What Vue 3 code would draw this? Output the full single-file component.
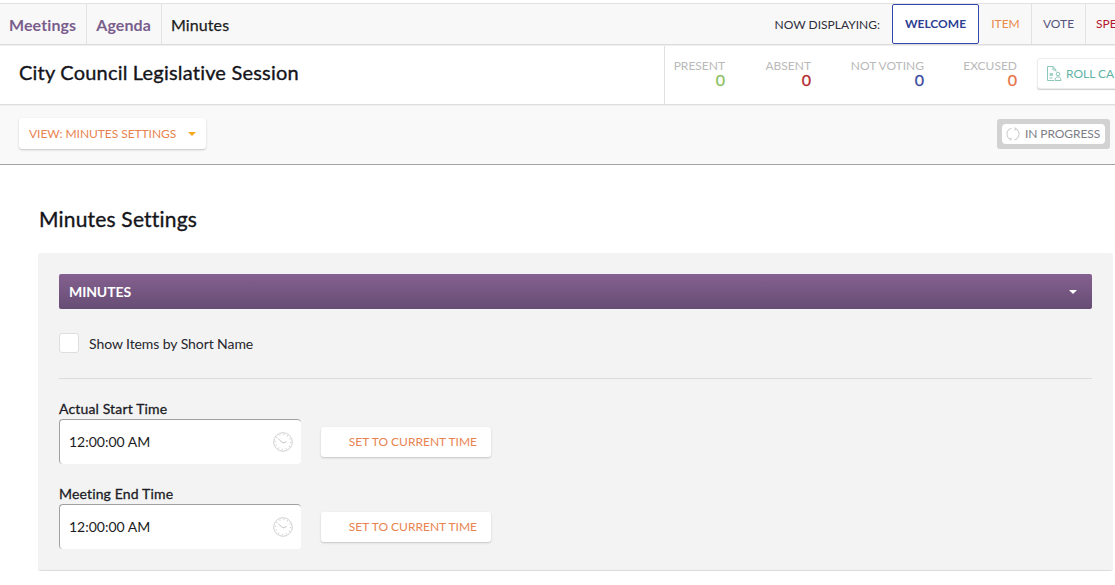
<script setup>
const stats = [
  { label: 'PRESENT', color: '#8cc063', w: 52 },
  { label: 'ABSENT', color: '#b3282d', w: 45 },
  { label: 'NOT VOTING', color: '#3a4a9f', w: 73 },
  { label: 'EXCUSED', color: '#e8734a', w: 53 },
]
const times = ['Actual Start Time', 'Meeting End Time']
</script>

<template>
  <div class="page">
    <nav class="topnav">
      <a class="crumb link first">Meetings</a>
      <a class="crumb link">Agenda</a>
      <a class="crumb current">Minutes</a>
      <div class="display">
        <span class="display-label">NOW DISPLAYING:</span>
        <span class="tab active">WELCOME</span>
        <span class="tab item">ITEM</span>
        <span class="tab vote">VOTE</span>
        <span class="tab speaker">SPEAKER</span>
      </div>
    </nav>

    <header class="header">
      <h1>City Council Legislative Session</h1>
      <div class="stats">
        <div v-for="s in stats" :key="s.label" class="stat" :style="{ width: s.w + 'px' }">
          <span class="stat-label">{{ s.label }}</span>
          <span class="stat-value" :style="{ color: s.color }">0</span>
        </div>
        <button class="rollcall">
          <svg width="15" height="16" viewBox="0 0 15 16" fill="none" stroke="#8cc8ba" stroke-width="1">
            <path d="M9 5.500V4L6 .5H.5v14H7" />
            <path d="M6 .5V4h3" />
            <path d="M2.500 7h3.500v3H2.500z" fill="#a6d5ca" stroke="none" />
            <path d="M2.500 12h3" />
            <circle cx="11" cy="8" r="1.800" />
            <path d="M8 14.500c0-2.500 1.300-3.700 3-3.700s3 1.200 3 3.700z" />
          </svg>
          <span>ROLL CALL</span>
        </button>
      </div>
    </header>

    <div class="toolbar">
      <button class="view-btn">
        <span>VIEW: MINUTES SETTINGS</span>
        <i class="caret orange"></i>
      </button>
      <div class="status">
        <div class="status-inner">
          <svg width="14" height="14" viewBox="0 0 14 14" fill="none" stroke="#cfcfcf" stroke-width="1.100">
            <path d="M5.500 1.200A6 6 0 0 0 3.500 11.900" />
            <path d="M8.500 12.800A6 6 0 0 0 10.500 2.100" />
            <path d="M8.500 .6l2 1.500-2.200 1" />
            <path d="M5.500 13.400l-2-1.500 2.200-1" />
          </svg>
          <span>IN PROGRESS</span>
        </div>
      </div>
    </div>

    <main class="content">
      <h2>Minutes Settings</h2>
      <section class="panel">
        <div class="bar">
          <span>MINUTES</span>
          <i class="caret white"></i>
        </div>
        <label class="check">
          <span class="box"></span>
          <span>Show Items by Short Name</span>
        </label>
        <hr />
        <div class="fields">
          <div v-for="t in times" :key="t" class="field">
            <div class="field-label">{{ t }}</div>
            <div class="field-row">
              <div class="input">
                <span class="time">12:00:00 AM</span>
                <svg width="20" height="20" viewBox="0 0 20 20" fill="none" stroke="#d0d0d0">
                  <circle cx="10" cy="10" r="9.300" />
                  <circle cx="10" cy="10" r="7.500" stroke-dasharray="1 2.930" stroke-width="1.300" />
                  <path d="M5.500 7l4.500 4 3.500-1.500" stroke="#c4c4c4" />
                </svg>
              </div>
              <button class="set-btn">SET TO CURRENT TIME</button>
            </div>
          </div>
        </div>
      </section>
    </main>
  </div>
</template>

<style scoped>
.page {
  width: 1115px;
  height: 585px;
  overflow: hidden;
  background: #fff;
  font-family: Lato, "Open Sans", sans-serif;
  color: #1c1c22;
  padding-top: 3px;
  box-sizing: border-box;
}
.topnav {
  display: flex;
  height: 42px;
  box-sizing: border-box;
  background: #f8f8f8;
  border-top: 1px solid #e2e2e2;
  border-bottom: 1px solid #dcdcdc;
}
.crumb {
  display: flex;
  align-items: center;
  padding: 0 10px 0 9px;
  font-size: 16px;
  border-right: 1px solid #e2e2e2;
}
.link {
  color: #7a5d8c;
  font-weight: 700;
  letter-spacing: 0.1px;
}
.current {
  border-right: 0;
  color: #1c1c22;
  -webkit-text-stroke: 0.25px #1c1c22;
  letter-spacing: 0.1px;
}
.display {
  margin-left: auto;
  display: flex;
  align-items: stretch;
  white-space: nowrap;
}
.display-label {
  align-self: center;
  font-size: 12px;
  color: #2e2e3a;
  margin-right: 12px;
}
.tab {
  display: flex;
  align-items: center;
  justify-content: center;
  font-size: 12px;
  box-sizing: border-box;
  padding-bottom: 1px;
}
.tab.active {
  width: 87px;
  background: #fff;
  border: 1px solid #3348a8;
  border-radius: 2px;
  color: #2e3f94;
  font-weight: 700;
}
.tab.item {
  width: 52px;
  color: #ea8a4a;
  border-right: 1px solid #e2e2e2;
  margin-left: 1px;
}
.tab.vote {
  width: 54px;
  color: #57537c;
  border-right: 1px solid #e2e2e2;
}
.tab.speaker {
  color: #b3182d;
  padding-left: 10px;
  width: 29px;
  overflow: hidden;
  justify-content: flex-start;
}
.header {
  display: flex;
  align-items: stretch;
  justify-content: space-between;
  height: 60px;
  box-sizing: border-box;
  border-top: 1px solid #efefef;
  border-bottom: 1px solid #dedede;
  background: #fff;
}
h1 {
  margin: 0;
  padding: 13px 0 0 19px;
  font-size: 20px;
  font-weight: 400;
  line-height: 27px;
  letter-spacing: 0.2px;
  -webkit-text-stroke: 0.35px #14141a;
  color: #14141a;
}
.stats {
  display: flex;
  width: 451px;
  flex-shrink: 0;
  box-sizing: border-box;
  border-left: 1px solid #e0e0e0;
  padding-top: 13px;
  overflow: hidden;
}
.stat {
  display: flex;
  flex-direction: column;
  align-items: flex-end;
  flex-shrink: 0;
  margin-right: 41px;
  white-space: nowrap;
}
.stat:first-child {
  margin-left: 8px;
}
.stat:nth-child(2) {
  margin-right: 40px;
}
.stat:nth-child(3) {
  margin-right: 40px;
}
.stat:nth-child(4) {
  margin-right: 20px;
}
.stat-label {
  font-size: 12px;
  line-height: 14px;
  color: #b9b9b9;
}
.stat-value {
  font-size: 16px;
  line-height: 13px;
  -webkit-text-stroke: 0.3px currentColor;
}
.rollcall {
  flex-shrink: 0;
  display: flex;
  align-items: center;
  gap: 4px;
  height: 31px;
  margin-top: -1px;
  padding: 0 8px 0 9px;
  width: 110px;
  background: #fff;
  border: 1px solid #ececec;
  border-radius: 3px;
  box-shadow: 0 1px 1px #cfcfcf;
  font: 12px Lato, sans-serif;
  color: #5fb3a5;
  white-space: nowrap;
  overflow: hidden;
}
.toolbar {
  display: flex;
  align-items: center;
  justify-content: space-between;
  height: 60px;
  box-sizing: border-box;
  padding: 0 5px 0 19px;
  background: #f9f9f9;
  border-top: 1px solid #efefef;
  border-bottom: 1px solid #a3a3a3;
}
.view-btn {
  display: flex;
  align-items: center;
  justify-content: space-between;
  width: 187px;
  height: 31px;
  padding: 0 10px;
  background: #fff;
  border: 0;
  border-radius: 3px;
  box-shadow: 0 1px 2px #c4c4c4;
  font: 12px Lato, sans-serif;
  letter-spacing: -0.05px;
  color: #e8834f;
  white-space: nowrap;
  margin-bottom: 3px;
  box-sizing: border-box;
}
.caret {
  display: block;
  width: 0;
  height: 0;
  border-left: 4px solid transparent;
  border-right: 4px solid transparent;
}
.caret.orange {
  border-top: 4px solid #f5a623;
}
.caret.white {
  border-top: 4px solid #fff;
}
.status {
  padding: 5px;
  background: #d2d2d2;
  border-radius: 3px;
  width: 113px;
  box-sizing: border-box;
  height: 30px;
  margin-bottom: 3px;
}
.status-inner {
  display: flex;
  align-items: center;
  gap: 5px;
  height: 20px;
  padding-left: 4px;
  background: #fff;
  border-radius: 4px;
  font-size: 12px;
  letter-spacing: -0.08px;
  color: #7d7d85;
  white-space: nowrap;
}
.content {
  padding: 0 0 0 38px;
}
h2 {
  margin: 0;
  padding: 40px 0 0 1px;
  font-size: 21px;
  font-weight: 400;
  line-height: 28px;
  height: 48px;
  letter-spacing: 0.19px;
  -webkit-text-stroke: 0.35px #14141a;
  color: #14141a;
}
.panel {
  width: 1075px;
  box-sizing: border-box;
  height: 318px;
  padding: 21px 0 0 21px;
  background: #f3f3f3;
  border-bottom: 1px solid #dcdcdc;
  border-radius: 3px;
}
.bar {
  display: flex;
  align-items: center;
  justify-content: space-between;
  width: 1033px;
  height: 35px;
  box-sizing: border-box;
  padding: 0 15px 0 10px;
  background: linear-gradient(#856090, #664d74);
  border-radius: 2px;
  color: #fff;
  font-size: 14px;
  font-weight: 700;
  letter-spacing: -0.1px;
}
.check {
  display: flex;
  align-items: center;
  gap: 10px;
  margin-top: 24px;
  font-size: 14px;
  letter-spacing: -0.08px;
  color: #26262c;
}
.box {
  width: 20px;
  height: 20px;
  box-sizing: border-box;
  background: #fff;
  border: 1px solid #dedede;
  border-radius: 3px;
}
hr {
  width: 1033px;
  height: 1px;
  margin: 25px 0 0;
  border: 0;
  background: #dcdcdc;
}
.fields {
  margin-top: 22px;
}
.field {
  height: 85px;
}
.field-label {
  font-size: 14px;
  line-height: 16px;
  margin-bottom: 2px;
  letter-spacing: 0.15px;
  -webkit-text-stroke: 0.3px #1c1c26;
  color: #1c1c26;
}
.field-row {
  display: flex;
  align-items: flex-start;
  gap: 20px;
}
.input {
  display: flex;
  align-items: center;
  justify-content: space-between;
  width: 242px;
  height: 45px;
  box-sizing: border-box;
  padding: 0 8px 0 9px;
  background: #fff;
  border-top: 1px solid #a0a0a0;
  border-left: 1px solid #a0a0a0;
  border-radius: 4px;
  font-size: 14px;
  color: #1c1c22;
}
.time {
  margin-bottom: 2px;
}
.set-btn {
  width: 170px;
  height: 30px;
  margin-top: 8px;
  box-sizing: border-box;
  padding: 0 14px 2px 0;
  text-align: right;
  background: #fff;
  border: 0;
  border-radius: 3px;
  box-shadow: 0 1px 2px #c4c4c4;
  font: 12px Lato, sans-serif;
  color: #e8834f;
}
</style>
